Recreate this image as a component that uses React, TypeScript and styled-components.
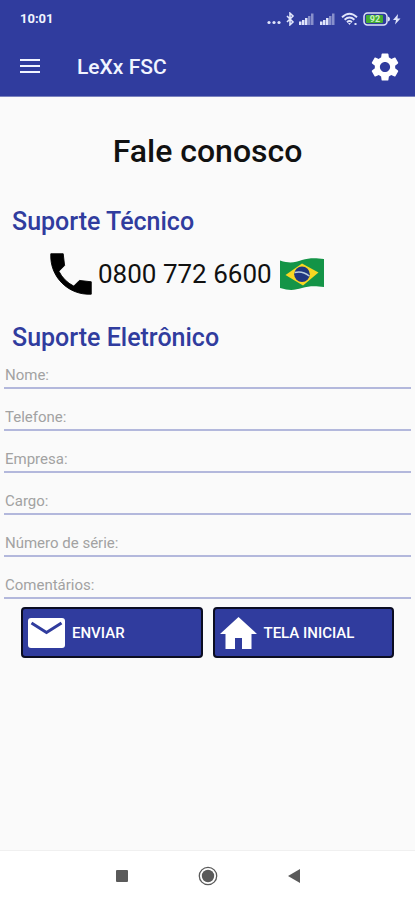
import React from "react";
import styled, { createGlobalStyle } from "styled-components";

const BLUE = "#303c9e";

const GlobalStyle = createGlobalStyle`
  *, *::before, *::after { box-sizing: border-box; }
  body { margin: 0; background: #fafafa; font-family: Roboto, "Noto Sans", sans-serif; color: #111; }
  svg { display: block; flex: none; }
`;

const Page = styled.div`
  display: flex;
  flex-direction: column;
  min-height: 100vh;
`;

const Header = styled.header`
  background: ${BLUE};
  color: #f1f4ff;
  border-bottom: 1px solid #7a82bd;
`;

const StatusBar = styled.div`
  display: flex;
  align-items: center;
  justify-content: space-between;
  height: 38px;
  padding: 0 13px 0 20px;
`;

const Clock = styled.time`
  font-size: 13px;
  font-weight: 700;
  line-height: 16px;
`;

const StatusIcons = styled.div`
  display: flex;
  align-items: center;
  color: #dfe4fa;
`;

const AppBar = styled.div`
  display: flex;
  align-items: center;
  height: 58px;
  padding: 0 13px 0 18px;
`;

const AppTitle = styled.span`
  flex: 1;
  margin-left: 35px;
  font-size: 21px;
  font-weight: 500;
  line-height: 28px;
`;

const IconButton = styled.button`
  padding: 0;
  border: 0;
  background: none;
  color: inherit;
  cursor: pointer;
`;

const Main = styled.main`
  flex: 1;
`;

const Title = styled.h1`
  margin: 34px 0 0;
  font-size: 32px;
  font-weight: 500;
  line-height: 40px;
  text-align: center;
`;

const SectionTitle = styled.h2`
  margin: 0;
  padding: 0 12px;
  font-size: 25px;
  font-weight: 500;
  line-height: 32px;
  color: ${BLUE};
`;

const TechnicalSection = styled.section`
  margin-top: 35px;
`;

const PhoneLink = styled.a`
  display: flex;
  align-items: center;
  height: 48px;
  margin: 12px 0 24px;
  padding-left: 44px;
  color: #111;
  font-size: 26px;
  font-weight: 400;
  text-decoration: none;
`;

const FlagSlot = styled.span`
  margin-left: 7px;
`;

const Form = styled.form`
  padding: 0 4px;
`;

const Field = styled.input`
  display: block;
  width: 100%;
  height: 35px;
  padding: 8px 0 0 1px;
  border: 0;
  border-bottom: 2px solid #b3b8dc;
  border-radius: 0;
  background: none;
  font-family: inherit;
  font-size: 15px;
  line-height: 20px;
  color: #111;

  & + & { margin-top: 7px; }
  &::placeholder { color: #a2a2a2; opacity: 1; }
`;

const Actions = styled.div`
  display: flex;
  gap: 10px;
  margin-top: 8px;
  padding: 0 17px;
`;

const ActionButton = styled.button`
  display: flex;
  flex: 1;
  align-items: center;
  gap: 6px;
  height: 51px;
  padding: 0 4px;
  border: 2px solid #0b0d22;
  border-radius: 4px;
  background: ${BLUE};
  color: #fff;
  font-family: inherit;
  font-size: 15px;
  font-weight: 500;
  cursor: pointer;
`;

const SystemNav = styled.nav`
  display: grid;
  grid-template-columns: repeat(3, 86px);
  justify-content: center;
  align-items: center;
  justify-items: center;
  height: 50px;
  border-top: 1px solid #f0f0f0;
  background: #fff;
  color: #5a5a5a;
`;

const Signal = () => (
  <svg width="15" height="12" viewBox="0 0 15 12" fill="currentColor">
    <path d="M0 8.500h2.500V12H0zM3 7h2.500v5H3zM6 5h2.500v7H6z" />
    <path d="M9 3h2.500v9H9zM12 .5h2.500V12H12z" opacity=".5" />
  </svg>
);

const StatusGlyphs = () => (
  <StatusIcons aria-hidden="true">
    <svg width="14" height="12" viewBox="0 0 14 12" fill="currentColor">
      <circle cx="2" cy="9.500" r="1.600" />
      <circle cx="7" cy="9.500" r="1.600" />
      <circle cx="12" cy="9.500" r="1.600" />
    </svg>
    <svg width="18" height="14" viewBox="0 0 18 14" fill="none" stroke="currentColor" strokeWidth="1.600">
      <path d="M6 4l6 6-3 2.800V1.200L12 4l-6 6" />
    </svg>
    <Signal />
    <svg width="6" height="12" />
    <Signal />
    <svg width="6" height="12" />
    <svg width="18" height="14" viewBox="0 0 18 14" fill="none" stroke="currentColor" strokeWidth="1.900">
      <path d="M1 5.200Q8.500-1.800 16 5.200M3.600 7.800q4.900-4.400 9.800 0M6 10.200q2.500-2.200 5 0" />
      <path d="M7 11l1.500 2 1.500-2zM13.500 11h2v2h-2z" fill="currentColor" stroke="none" />
    </svg>
    <svg width="4" height="12" />
    <svg width="28" height="14" viewBox="0 0 28 14">
      <rect x="1" y="1" width="23" height="12" rx="3.500" fill="none" stroke="currentColor" strokeWidth="1.500" />
      <rect x="3" y="3" width="17" height="8" rx="1" fill="#43ae32" />
      <path d="M25 4.500q2 .5 2 2.500t-2 2.500z" fill="currentColor" />
      <text x="12" y="10.200" fontSize="9" fontWeight="700" textAnchor="middle" fill="#c9efc4">92</text>
    </svg>
    <svg width="11" height="12" viewBox="0 0 11 12" fill="currentColor">
      <path d="M7 1L2 7h3l-1 4.500L9.500 5.500H6.500z" />
    </svg>
  </StatusIcons>
);

const MenuIcon = () => (
  <svg width="24" height="24" viewBox="0 0 24 24" fill="currentColor">
    <path d="M2 4h20v2H2zM2 10h20v2H2zM2 16h20v2H2z" />
  </svg>
);

const GearIcon = () => (
  <svg width="34" height="34" viewBox="0 0 24 24" fill="#fff">
    <path d="M19.140 12.940c.04-.3.060-.61.060-.94 0-.32-.02-.64-.07-.94l2.030-1.580c.18-.14.23-.41.120-.61l-1.920-3.320c-.12-.22-.37-.29-.59-.22l-2.390.96c-.5-.38-1.030-.7-1.620-.94l-.36-2.540c-.04-.24-.24-.41-.48-.41h-3.840c-.24 0-.43.17-.47.410l-.36 2.540c-.59.240-1.130.570-1.620.940l-2.390-.96c-.22-.08-.47 0-.59.220L2.740 8.870c-.12.210-.08.470.120.610l2.030 1.580c-.05.3-.09.630-.09.940s.02.640.070.940l-2.030 1.580c-.18.140-.23.410-.12.610l1.920 3.320c.12.220.37.290.59.220l2.390-.96c.5.380 1.030.7 1.620.940l.36 2.540c.05.240.24.410.48.410h3.840c.24 0 .44-.17.470-.41l.36-2.540c.59-.24 1.130-.56 1.620-.94l2.390.96c.22.080.47 0 .59-.22l1.920-3.320c.12-.22.070-.47-.12-.61l-2.010-1.580zM12 15.600c-1.980 0-3.600-1.620-3.600-3.600s1.620-3.600 3.600-3.600 3.600 1.620 3.600 3.600-1.620 3.600-3.600 3.600z" />
  </svg>
);

const PhoneIcon = () => (
  <svg width="54" height="54" viewBox="0 0 24 24" fill="#000" stroke="#000" strokeWidth=".4" strokeLinejoin="round">
    <path d="M21 15.460l-5.270-.61-2.520 2.520a15.050 15.050 0 0 1-6.590-6.590l2.530-2.530L8.540 3H3.030C2.450 13.180 10.820 21.550 21 20.970z" />
  </svg>
);

const FlagIcon = () => (
  <svg width="46" height="34" viewBox="0 0 46 34" role="img" aria-label="Brasil">
    <path d="M1 3.500C12 7 16 5 23 3S36 1 45 2V30c-9-1-15-1-22 1S11 34 1 31z" fill="#149447" />
    <path d="M6.500 18L23 6.500 39.500 15.500 24 28.500z" fill="#f8d722" />
    <circle cx="23" cy="17.300" r="7.800" fill="#20367f" />
    <path d="M15.800 15.500q7.500-2 14.500 3.500" fill="none" stroke="#b8cce0" strokeWidth="1.500" />
  </svg>
);

const MailIcon = () => (
  <svg width="39" height="32" viewBox="0 0 39 32">
    <rect x="1" y="1" width="37" height="30" rx="3" fill="#fff" />
    <path d="M4.500 6L19.500 15.500 34.500 6" fill="none" stroke={BLUE} strokeWidth="3" />
  </svg>
);

const HomeIcon = () => (
  <svg width="39" height="34" viewBox="0 0 39 34" fill="#fff">
    <path d="M19.500 1L38 18h-5.500v15H23V22h-7v11H6.500V18H1z" />
  </svg>
);

const FIELDS = [
  { label: "Nome:", name: "nome", type: "text" },
  { label: "Telefone:", name: "telefone", type: "tel" },
  { label: "Empresa:", name: "empresa", type: "text" },
  { label: "Cargo:", name: "cargo", type: "text" },
  { label: "Número de série:", name: "serie", type: "text" },
  { label: "Comentários:", name: "comentarios", type: "text" },
];

export default function App() {
  return (
    <Page>
      <GlobalStyle />
      <Header>
        <StatusBar>
          <Clock>10:01</Clock>
          <StatusGlyphs />
        </StatusBar>
        <AppBar>
          <IconButton type="button" aria-label="Menu"><MenuIcon /></IconButton>
          <AppTitle>LeXx FSC</AppTitle>
          <IconButton type="button" aria-label="Configurações"><GearIcon /></IconButton>
        </AppBar>
      </Header>
      <Main>
        <Title>Fale conosco</Title>
        <TechnicalSection>
          <SectionTitle>Suporte Técnico</SectionTitle>
          <PhoneLink href="tel:08007726600">
            <PhoneIcon />
            <span>0800 772 6600</span>
            <FlagSlot><FlagIcon /></FlagSlot>
          </PhoneLink>
        </TechnicalSection>
        <section>
          <SectionTitle>Suporte Eletrônico</SectionTitle>
          <Form onSubmit={(event) => event.preventDefault()}>
            {FIELDS.map((field) => (
              <Field
                key={field.name}
                type={field.type}
                name={field.name}
                placeholder={field.label}
                aria-label={field.label}
              />
            ))}
            <Actions>
              <ActionButton type="submit"><MailIcon />ENVIAR</ActionButton>
              <ActionButton type="button"><HomeIcon />TELA INICIAL</ActionButton>
            </Actions>
          </Form>
        </section>
      </Main>
      <SystemNav aria-label="Sistema">
        <IconButton type="button" aria-label="Recentes">
          <svg width="12" height="12" viewBox="0 0 12 12" fill="currentColor"><rect width="12" height="12" rx="1" /></svg>
        </IconButton>
        <IconButton type="button" aria-label="Início">
          <svg width="20" height="20" viewBox="0 0 20 20" fill="currentColor">
            <circle cx="10" cy="10" r="8.700" fill="none" stroke="currentColor" strokeWidth="1.300" />
            <circle cx="10" cy="10" r="6.200" />
          </svg>
        </IconButton>
        <IconButton type="button" aria-label="Voltar">
          <svg width="12" height="14" viewBox="0 0 12 14" fill="currentColor"><path d="M0 7L12 0v14z" /></svg>
        </IconButton>
      </SystemNav>
    </Page>
  );
}
